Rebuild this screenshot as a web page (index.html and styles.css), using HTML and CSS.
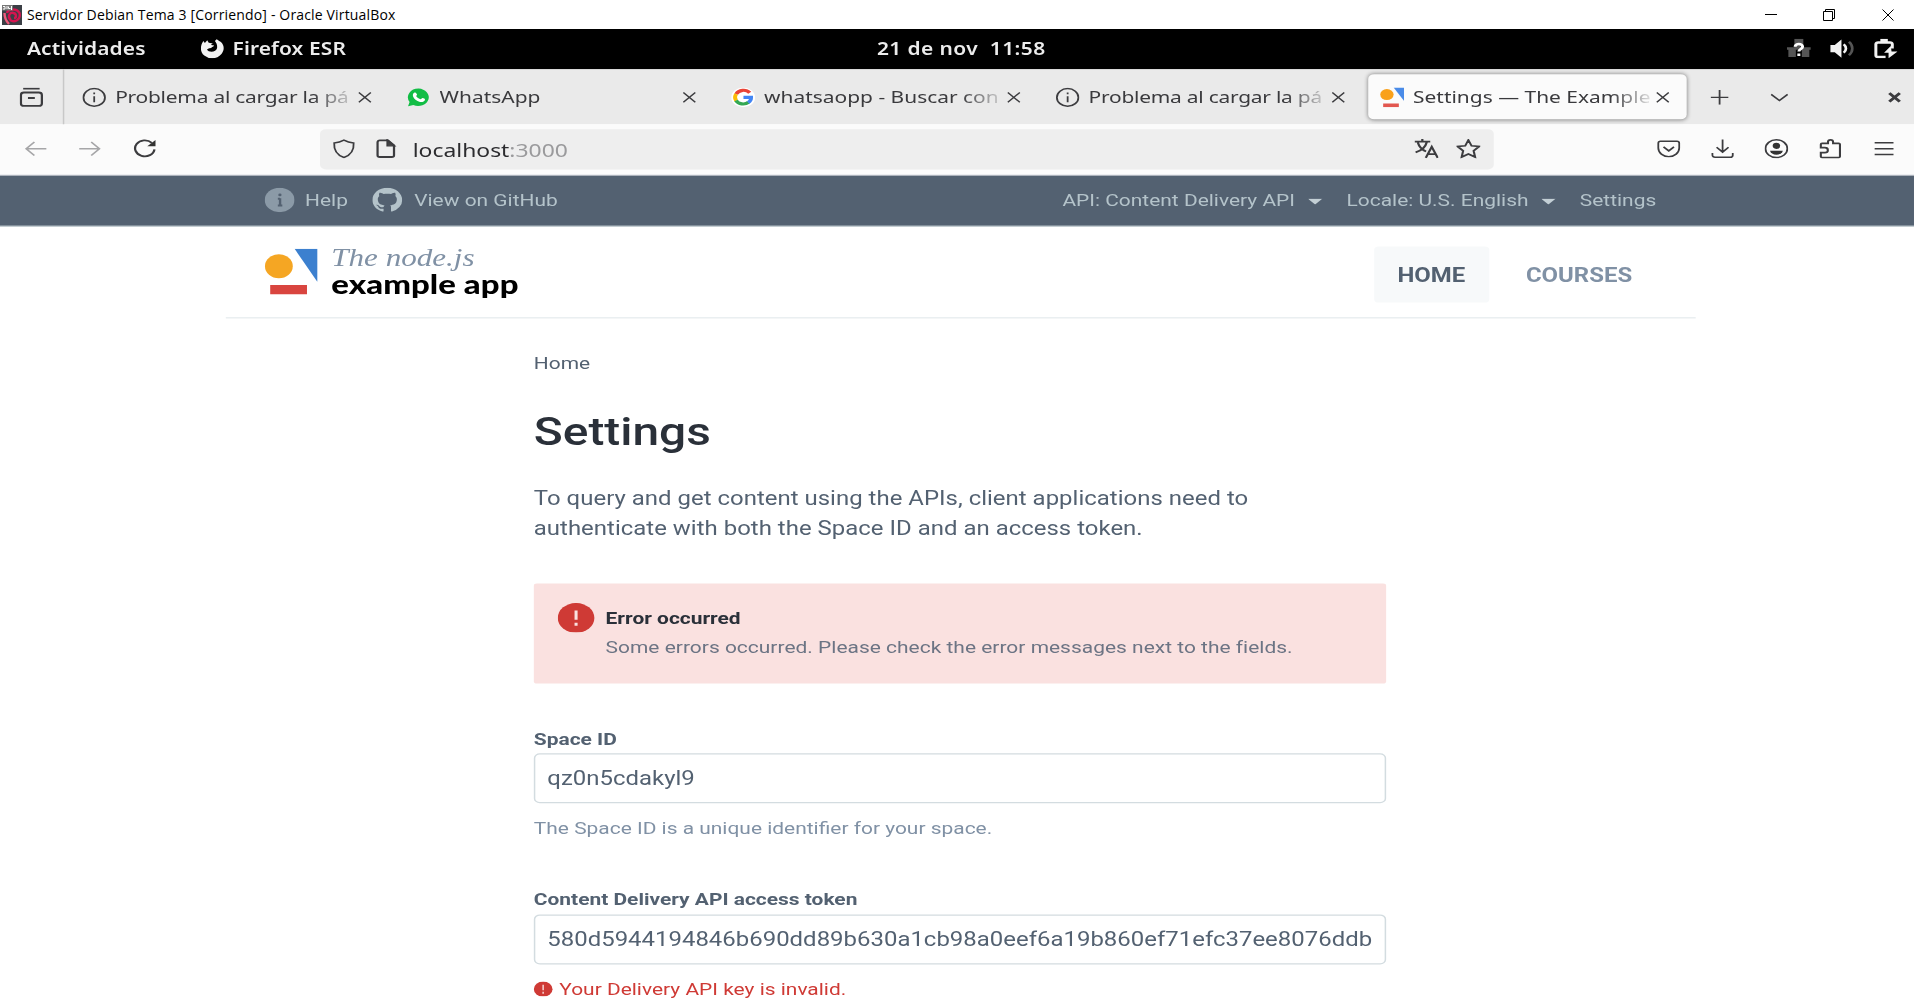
FILE: index.html
```html
<!DOCTYPE html>
<html lang="es">
<head>
<meta charset="utf-8">
<title>Servidor Debian Tema 3 [Corriendo] - Oracle VirtualBox</title>
<link rel="stylesheet" href="styles.css">
</head>
<body>
<header class="host-bar">
  <svg class="host-icon" viewBox="0 0 20 20"><rect width="20" height="20" fill="#3b3f45"/><path d="M5 8C6 3.500 15 3 17.500 8c1.500 6-4 10-8.500 7.500-4-4-1.500-8.500 2.500-7.500 3.500 1 3 5 .5 5" fill="none" stroke="#d5144f" stroke-width="2.400"/><path d="M2.500 8c0 4 1.500 8 4.500 11" fill="none" stroke="#f05a7c" stroke-width="2.400"/><rect width="11" height="5.500" fill="#777"/><path d="M1 1.500h2v2.500H1M5 1v3M6.500 1.500v2h2M9.500 1v4" stroke="#fff" fill="none"/></svg>
  <span class="host-title">Servidor Debian Tema 3 [Corriendo] - Oracle VirtualBox</span>
  <svg class="host-min" viewBox="0 0 12 12"><path d="M0 5.500h12"/></svg>
  <svg class="host-max" viewBox="0 0 12 12"><path d="M.5 2.500h9v9h-9zM2.500 2.500v-2h9v9h-2"/></svg>
  <svg class="host-close" viewBox="0 0 12 12"><path d="M.5.5l11 11M11.500.5l-11 11"/></svg>
</header>

<div class="viewport">
<div class="guest">
  <div class="topbar">
    <span class="activities">Actividades</span>
    <svg class="fx" viewBox="0 0 16 16"><path fill="#f2f2f2" d="M8 16A7.700 7.700 0 0 1 .4 8.300C.3 5.500 1 3.500 2 1.800l1 1.700L4.600 1.200l1 2 2.900.6c-1 .3-1.300.9-1.300 1.300l2 .5c-.2.9-1.500 1.300-2 2-1.800.3-2.700.8-2.700 1.400 1 2.400 6.300 2.100 6.700-1.400C11.500 5 10.500 3 9.700 1.900L10.900.3c.9 1 2.400 1.500 3.500 3.200 1.500 2.300 1.800 6-.3 9C12.600 14.800 10.400 16 8 16z"/></svg>
    <span class="app-name">Firefox ESR</span>
    <span class="clock">21 de nov&nbsp; 11:58</span>
    <div class="tray">
      <svg viewBox="0 0 16 16"><path fill="#555" d="M5 0h6v5H9v2h7v2h-1v6h-5V9H6v6H1V9H0V7h5z"/><path d="M5.500 6.500c0-3 5-3 5 0 0 2-2.500 1.700-2.500 4M8 12v2.200" stroke="#fff" stroke-width="2" fill="none"/></svg>
      <svg viewBox="0 0 16 16"><path fill="#f2f2f2" d="M0 5h3l4.500-4.500v15L3 11H0z"/><path d="M9 4.500c2 2 2 5 0 7" stroke="#f2f2f2" stroke-width="1.800" fill="none"/><path d="M12.500 2.500c3 3 3 8 0 11" stroke="#555" stroke-width="1.800" fill="none"/></svg>
      <svg viewBox="0 0 16 16"><path d="M3 3h8a1.500 1.500 0 0 1 1.500 1.500V8M8 15H3a1.500 1.500 0 0 1-1.500-1.500v-9A1.500 1.500 0 0 1 3 3" stroke="#f2f2f2" stroke-width="2" fill="none"/><path fill="#f2f2f2" d="M4.500 0h5v3h-5zM11.500 6L7 11.500h3V16l6-5.500h-4z"/></svg>
    </div>
  </div>

  <div class="tabbar">
    <div class="recent"><svg class="ln i16" viewBox="0 0 16 16"><path d="M2.500.8h11M3 4h10a2 2 0 0 1 2 2v7a2 2 0 0 1-2 2H3a2 2 0 0 1-2-2V6a2 2 0 0 1 2-2zM5.700 8.500h4.600" stroke-width="1.500"/></svg></div>
    <div class="tab"><svg class="ln i16" viewBox="0 0 16 16"><circle cx="8" cy="8" r="7.200"/><path d="M8 7v5M8 4v1.500"/></svg><span class="tab-label long">Problema al cargar la pá</span><svg class="x" viewBox="0 0 10 10"><path d="M1 1l8 8M9 1l-8 8"/></svg></div>
    <div class="tab"><svg class="i16" viewBox="0 0 16 16"><path fill="#12bd45" d="M8 .8a7.100 7.100 0 1 1-3.600 13.400L.9 15.200l1-3.500A7.100 7.100 0 0 1 8 .8z"/><path fill="#fff" d="M5.300 4c.8-.3 1 .3 1.600 1.600.2.500-.6.9-.6 1.300.7 1.400 1.700 2.200 3.100 2.700.4 0 .8-1.100 1.200-1 1.900.8 1.700.8 1.500 1.800-.4 1.300-2 1.700-3.200 1.300C6.500 10.900 4.800 9.200 4.200 7c-.3-1.200.1-2.500 1.100-3z"/></svg><span class="tab-label">WhatsApp</span><svg class="x" viewBox="0 0 10 10"><path d="M1 1l8 8M9 1l-8 8"/></svg></div>
    <div class="tab"><svg class="i16" viewBox="0 0 16 16"><circle cx="8" cy="8" r="8" fill="#fff"/><g fill="none" stroke-width="2.600"><path stroke="#ea4335" d="M12.400 4.200A5.400 5.400 0 0 0 3.300 5.300"/><path stroke="#fbbc05" d="M3.300 5.200a5.400 5.400 0 0 0 0 5.500"/><path stroke="#34a853" d="M3.200 10.500a5.400 5.400 0 0 0 8.400 1.500"/><path stroke="#4285f4" d="M8.200 8h5.100c0 2-.7 3.200-1.900 4.200"/></g></svg><span class="tab-label">whatsaopp - Buscar con</span><svg class="x" viewBox="0 0 10 10"><path d="M1 1l8 8M9 1l-8 8"/></svg></div>
    <div class="tab"><svg class="ln i16" viewBox="0 0 16 16"><circle cx="8" cy="8" r="7.200"/><path d="M8 7v5M8 4v1.500"/></svg><span class="tab-label long">Problema al cargar la pá</span><svg class="x" viewBox="0 0 10 10"><path d="M1 1l8 8M9 1l-8 8"/></svg></div>
    <div class="tab active"><svg class="i16" viewBox="0 0 16 16"><circle cx="4.500" cy="5.700" r="4.500" fill="#f9a11b"/><path fill="#4a8be8" d="M9 0h7v11z"/><path fill="#e2574f" d="M2 13h10.500v3H2z"/></svg><span class="tab-label">Settings — The Example</span><svg class="x" viewBox="0 0 10 10"><path d="M1 1l8 8M9 1l-8 8"/></svg></div>
    <svg class="ln new-tab" viewBox="0 0 12 12"><path d="M6 0v12M0 6h12"/></svg>
    <svg class="ln all-tabs" viewBox="0 0 12 12"><path d="M.5 3.500L6 8.500l5.500-5"/></svg>
    <svg class="ln win-close" viewBox="0 0 10 10"><path d="M1.500 1.500l7 7M8.500 1.500l-7 7"/></svg>
  </div>

  <div class="navbar">
    <svg class="ln dim i16" viewBox="0 0 16 16"><path d="M15 8H1.500M7 2.500L1.500 8 7 13.500"/></svg>
    <svg class="ln dim i16 fwd" viewBox="0 0 16 16"><path d="M1 8h13.500M9 2.500L14.500 8 9 13.500"/></svg>
    <svg class="ln i16 reload" viewBox="0 0 16 16"><path d="M14.300 8.500A6.500 6.500 0 1 1 12.500 3.200" stroke-width="1.500"/><path d="M15 .8V6H9.500z" fill="#333" stroke="none"/></svg>
    <div class="urlbar">
      <svg class="ln i16" viewBox="0 0 16 16"><path d="M8 1c2 1.300 4 2 6.500 2.300C14.800 8.500 13 13 8 15.200 3 13 1.200 8.500 1.500 3.300 4 3 6 2.300 8 1z"/></svg>
      <svg class="ln i16 doc" viewBox="0 0 16 16"><path stroke-width="1.500" d="M9.500 1.200H4a1.500 1.500 0 0 0-1.500 1.500v10.600A1.500 1.500 0 0 0 4 14.800h8a1.500 1.500 0 0 0 1.500-1.500V5.200z"/><path d="M9 1v4.700h4.700z" fill="#444"/></svg>
      <span class="url">localhost<i>:3000</i></span>
      <svg class="ln i16 translate" viewBox="0 0 16 16"><path stroke-width="1.500" d="M0 2.200h10.500M5.200 0v2.200M8.200 2.500c-.8 4-3.500 7-7.500 8.500M2.200 3c.8 3.500 3 6 5.500 7.300M7.500 15.500l4-9 4 9M8.800 12.500h5.400"/></svg>
      <svg class="ln i16 star" viewBox="0 0 16 16"><path stroke-width="1.400" d="M8 .9l2.100 4.700 5.100.6-3.700 3.500 1 5.200L8 12.400l-4.500 2.500 1-5.200L.8 6.200l5.100-.6z"/></svg>
    </div>
    <div class="tools">
      <svg class="ln" viewBox="0 0 16 16"><path d="M2.500 2h11A1.500 1.500 0 0 1 15 3.500v4a7 7 0 0 1-14 0v-4A1.500 1.500 0 0 1 2.500 2zM4.500 6.500L8 9.800l3.500-3.300"/></svg>
      <svg class="ln" viewBox="0 0 16 16"><path d="M8 .5v10M4 6.800l4 4 4-4M1.200 11.500v1.800a1.700 1.700 0 0 0 1.700 1.700h10.200a1.700 1.700 0 0 0 1.700-1.700v-1.800"/></svg>
      <svg class="ln" viewBox="0 0 16 16"><circle cx="8" cy="8" r="7.300"/><circle cx="8" cy="5.700" r="2.500" fill="#333" stroke="none"/><path d="M3.700 9.700h8.600c-.5 2-2 3.200-4.300 3.200S4.200 11.700 3.700 9.700z" fill="#333" stroke="none"/></svg>
      <svg class="ln" viewBox="0 0 16 16"><path stroke-width="1.400" d="M1.700 7.200V4.500a.8.800 0 0 1 .8-.8H6.500V2.500a1.700 1.700 0 0 1 3.400 0v1.200h3.800a.8.800 0 0 1 .8.800v10a.8.800 0 0 1-.8.800H2.500a.8.800 0 0 1-.8-.8v-3.300h2.700a2 2 0 0 0 0-4z"/></svg>
      <svg class="ln" viewBox="0 0 16 16"><path d="M1.700 3.200h12.600M1.700 8h12.600M1.700 12.800h12.600"/></svg>
    </div>
  </div>

  <main class="page">
    <div class="utility">
      <svg class="i20" viewBox="0 0 20 20"><circle cx="10" cy="10" r="10" fill="#8b9aa7"/><path d="M10.300 8.500v6.500M8.800 9h1.500M8.800 14.600h3" stroke="#536171" stroke-width="1.600"/><circle cx="10.200" cy="5.900" r="1.100" fill="#536171"/></svg>
      <a class="help">Help</a>
      <svg class="i20" viewBox="0 0 16 16"><path fill="#b4c3ca" d="M8 0C3.580 0 0 3.580 0 8c0 3.540 2.290 6.530 5.470 7.590.4.070.55-.17.55-.38 0-.19-.01-.82-.01-1.490-2.010.37-2.530-.49-2.690-.94-.09-.23-.48-.94-.82-1.130-.28-.15-.68-.52-.01-.53.63-.01 1.080.58 1.230.82.72 1.210 1.870.87 2.330.66.07-.52.28-.87.51-1.070-1.780-.2-3.640-.89-3.640-3.950 0-.87.31-1.590.82-2.150-.08-.2-.36-1.020.08-2.120 0 0 .67-.21 2.200.82.64-.18 1.320-.27 2-.27s1.360.09 2 .27c1.530-1.040 2.200-.82 2.200-.82.44 1.100.16 1.920.08 2.120.51.560.82 1.270.82 2.150 0 3.070-1.870 3.750-3.650 3.950.29.25.54.73.54 1.480 0 1.070-.01 1.930-.01 2.200 0 .21.15.46.55.38A8.010 8.010 0 0 0 16 8c0-4.420-3.580-8-8-8z"/></svg>
      <a class="github">View on GitHub</a>
      <a class="api">API: Content Delivery API</a><i class="caret"></i>
      <a class="locale">Locale: U.S. English</a><i class="caret"></i>
      <a class="set">Settings</a>
    </div>
    <div class="masthead">
      <svg class="logo" viewBox="0 0 36 38"><ellipse cx="9.500" cy="14.200" rx="9.300" ry="9.800" fill="#f5a623"/><path fill="#3c80cf" d="M20 0h15.200v27z"/><path fill="#d9453f" d="M3.700 29.700h24.600v7.500H3.700z"/></svg>
      <div class="brand"><em>The node.js</em><strong>example app</strong></div>
      <nav><a class="home">HOME</a><a class="courses">COURSES</a></nav>
    </div>
    <div class="content">
      <div class="crumb">Home</div>
      <h1>Settings</h1>
      <p class="intro">To query and get content using the APIs, client applications need to<br>authenticate with both the Space ID and an access token.</p>
      <div class="alert">
        <svg viewBox="0 0 24 24"><circle cx="12" cy="12" r="12" fill="#cf3a35"/><path d="M12 6v7.500M12 15.800v2.400" stroke="#fae1e0" stroke-width="2"/></svg>
        <div><b>Error occurred</b><span>Some errors occurred. Please check the error messages next to the fields.</span></div>
      </div>
      <label>Space ID</label>
      <div class="field short">qz0n5cdakyl9</div>
      <div class="hint">The Space ID is a unique identifier for your space.</div>
      <label class="second">Content Delivery API access token</label>
      <div class="field">580d5944194846b690dd89b630a1cb98a0eef6a19b860ef71efc37ee8076ddb</div>
      <div class="invalid"><svg viewBox="0 0 24 24"><circle cx="12" cy="12" r="12" fill="#cf3a35"/><path d="M12 5v8.500M12 16v3" stroke="#f3c4c2" stroke-width="2.200"/></svg><span>Your Delivery API key is invalid.</span></div>
    </div>
  </main>
</div>
</div>
</body>
</html>
```

FILE: styles.css
```css
* { box-sizing: border-box; }
body { margin: 0; height: 1006px; overflow: hidden; background: #fff; }
svg { display: block; flex: none; }
span, a { white-space: nowrap; }

/* Host window title bar */
.host-bar { display: flex; align-items: center; height: 29px; background: #fff; font: 14px/29px "Open Sans", sans-serif; color: #000; }
.host-icon { width: 20px; height: 20px; margin: 0 5px 0 2px; }
.host-title { width: 1737px; letter-spacing: 0.16px; }
.host-min, .host-max, .host-close { width: 12px; height: 12px; fill: none; stroke: #000; stroke-width: 1; }
.host-min { margin-left: 1px; }
.host-max { margin-left: 46px; }
.host-close { margin-left: 47px; }

/* Guest display: 1280x800 stretched to the window */
.viewport { width: 1914px; height: 977px; overflow: hidden; }
.guest { width: 1280px; height: 800px; overflow: hidden; transform: scale(1.4953, 1.22125); transform-origin: 0 0; font-family: "Noto Sans", sans-serif; }
.i16 { width: 16px; height: 16px; }
.i20 { width: 20px; height: 20px; }
.ln { fill: none; stroke: #3c3c3f; stroke-width: 1.2; }

.topbar { display: flex; align-items: center; height: 33px; padding: 0 11.500px 1.500px 18px; background: #000; color: #ececec; font-size: 14px; font-weight: 600; letter-spacing: 0.08px; }
.activities { width: 115.500px; }
.fx { width: 16px; height: 16px; }
.app-name { width: 430px; padding-left: 6px; }
.clock { flex: 1; padding-left: 7px; letter-spacing: 0.27px; }
.tray { display: flex; gap: 13px; }
.tray svg { width: 16px; height: 16px; }

.tabbar { display: flex; align-items: center; height: 45px; background: #eaeaea; font-size: 14px; color: #3a3a3d; }
.recent { display: flex; align-items: center; width: 43px; height: 45px; padding-left: 12.500px; border-right: 1px solid #c8c8c8; }
.tab { display: flex; align-items: center; width: 217px; height: 37px; padding: 0 11.500px 0 12px; }
.tab.active { width: 213px; margin: 0 0 0 3.700px; padding: 0 11px 0 8.300px; background: #fbfbfb; border-radius: 4px; box-shadow: 0 0 3px rgba(0,0,0,.45); }
.tab-label { flex: 1; min-width: 0; margin: 0 1.500px 0 6px; mask-image: linear-gradient(to right, #000 calc(100% - 28px), transparent calc(100% + 3px)); }
.tab-label.long { letter-spacing: -0.16px; }
.x { width: 10px; height: 10px; stroke: #3c3c3f; fill: none; stroke-width: 1; }
.new-tab { width: 12px; height: 12px; margin-left: 16px; }
.all-tabs { width: 12px; height: 12px; margin-left: 28px; }
.win-close { width: 10px; height: 10px; margin-left: 66px; stroke-width: 2.2; }

.navbar { display: flex; align-items: center; height: 41.500px; padding-left: 16px; background: #fbfbfb; border-bottom: 1px solid #e4e6ea; }
.dim { stroke: #a6a6a8; }
.fwd { margin-left: 20px; }
.reload { margin-left: 20.500px; }
.urlbar { display: flex; align-items: center; width: 785px; height: 33px; margin-left: 109px; padding-left: 8px; background: #eee; border-radius: 4px; }
.doc { margin-left: 12px; }
.url { width: 680px; padding: 1px 0 0 10.500px; font-size: 15.300px; color: #2c2c2f; }
.url i { font-style: normal; color: #9a9a9c; }
.star { margin-left: 12px; }
.tools { display: flex; gap: 20.200px; margin-left: 109px; }
.tools svg { width: 16px; height: 16px; }

/* Web page */
.page { height: 681px; background: #fff; font-family: Roboto, sans-serif; }
.utility { display: flex; align-items: center; height: 42.500px; padding-left: 176.500px; background: #536171; border-bottom: 1.500px solid #d3dce0; font-size: 14px; color: #b4c3ca; }
.help { width: 52px; padding-left: 7.500px; }
.github { width: 442px; padding-left: 8.500px; }
.caret { width: 10px; height: 5px; margin: 2px 0 0 8.500px; background: #c3cfd5; clip-path: polygon(0 0, 100% 0, 50% 100%); }
.api { width: 155.500px; }
.locale { width: 121.500px; margin-left: 16px; }
.set { margin-left: 16px; }
.masthead { display: flex; width: 983px; height: 74.500px; margin-left: 150.500px; padding: 15.500px 26px 0 26px; border-bottom: 1px solid #e5ebed; }
.logo { width: 36px; height: 38px; margin-top: 2.500px; }
.brand { display: flex; flex-direction: column; width: 706px; margin-top: -2px; padding-left: 9px; }
.brand em { font: italic 20.800px/22px "Liberation Serif", serif; color: #8091a5; }
.brand strong { font: 900 22px/22px Lato, sans-serif; letter-spacing: 0.05px; color: #000; }
nav { display: flex; font-size: 16px; font-weight: 700; line-height: 47px; }
.home { width: 77.500px; height: 46.500px; text-align: center; background: #f7f9fa; border-radius: 3px; color: #536171; }
.courses { padding-left: 24.500px; color: #8091a5; }
.content { width: 570px; margin-left: 357px; color: #536171; }
.crumb { padding-top: 26px; font-size: 14px; line-height: 20px; }
h1 { margin: 27px 0 0; font-size: 32px; font-weight: 500; line-height: 40px; color: #2a3039; }
.intro { margin: 23px 0 0; font-size: 16px; line-height: 24.500px; letter-spacing: 0.015px; }
.alert { display: flex; height: 82px; margin-top: 32.400px; padding: 16px; background: #fae1e0; border-radius: 2px; }
.alert svg { width: 24.500px; height: 24.500px; margin-right: 7.500px; }
.alert div { display: flex; flex-direction: column; font-size: 14px; line-height: 24.500px; }
.alert b { font-weight: 700; color: #2a3039; }
.alert span { color: #6c7484; letter-spacing: 0.01px; }
label { display: block; margin-top: 35.300px; font-size: 14px; font-weight: 700; line-height: 20px; }
.field { height: 41px; margin-top: 2.200px; padding: 0 8px; border: 1px solid #d3dce0; border-radius: 4px; font-size: 16px; line-height: 39px; white-space: nowrap; letter-spacing: 0.01px; }
.hint { margin-top: 10px; font-size: 14px; line-height: 20px; color: #8091a5; }
label.second { margin-top: 37.700px; }
.second + .field { margin-top: 3px; }
.invalid { display: flex; align-items: center; margin-top: 10px; font-size: 14px; line-height: 20px; color: #cf3a35; }
.invalid svg { width: 12.500px; height: 12.500px; margin-right: 4.500px; }
```
